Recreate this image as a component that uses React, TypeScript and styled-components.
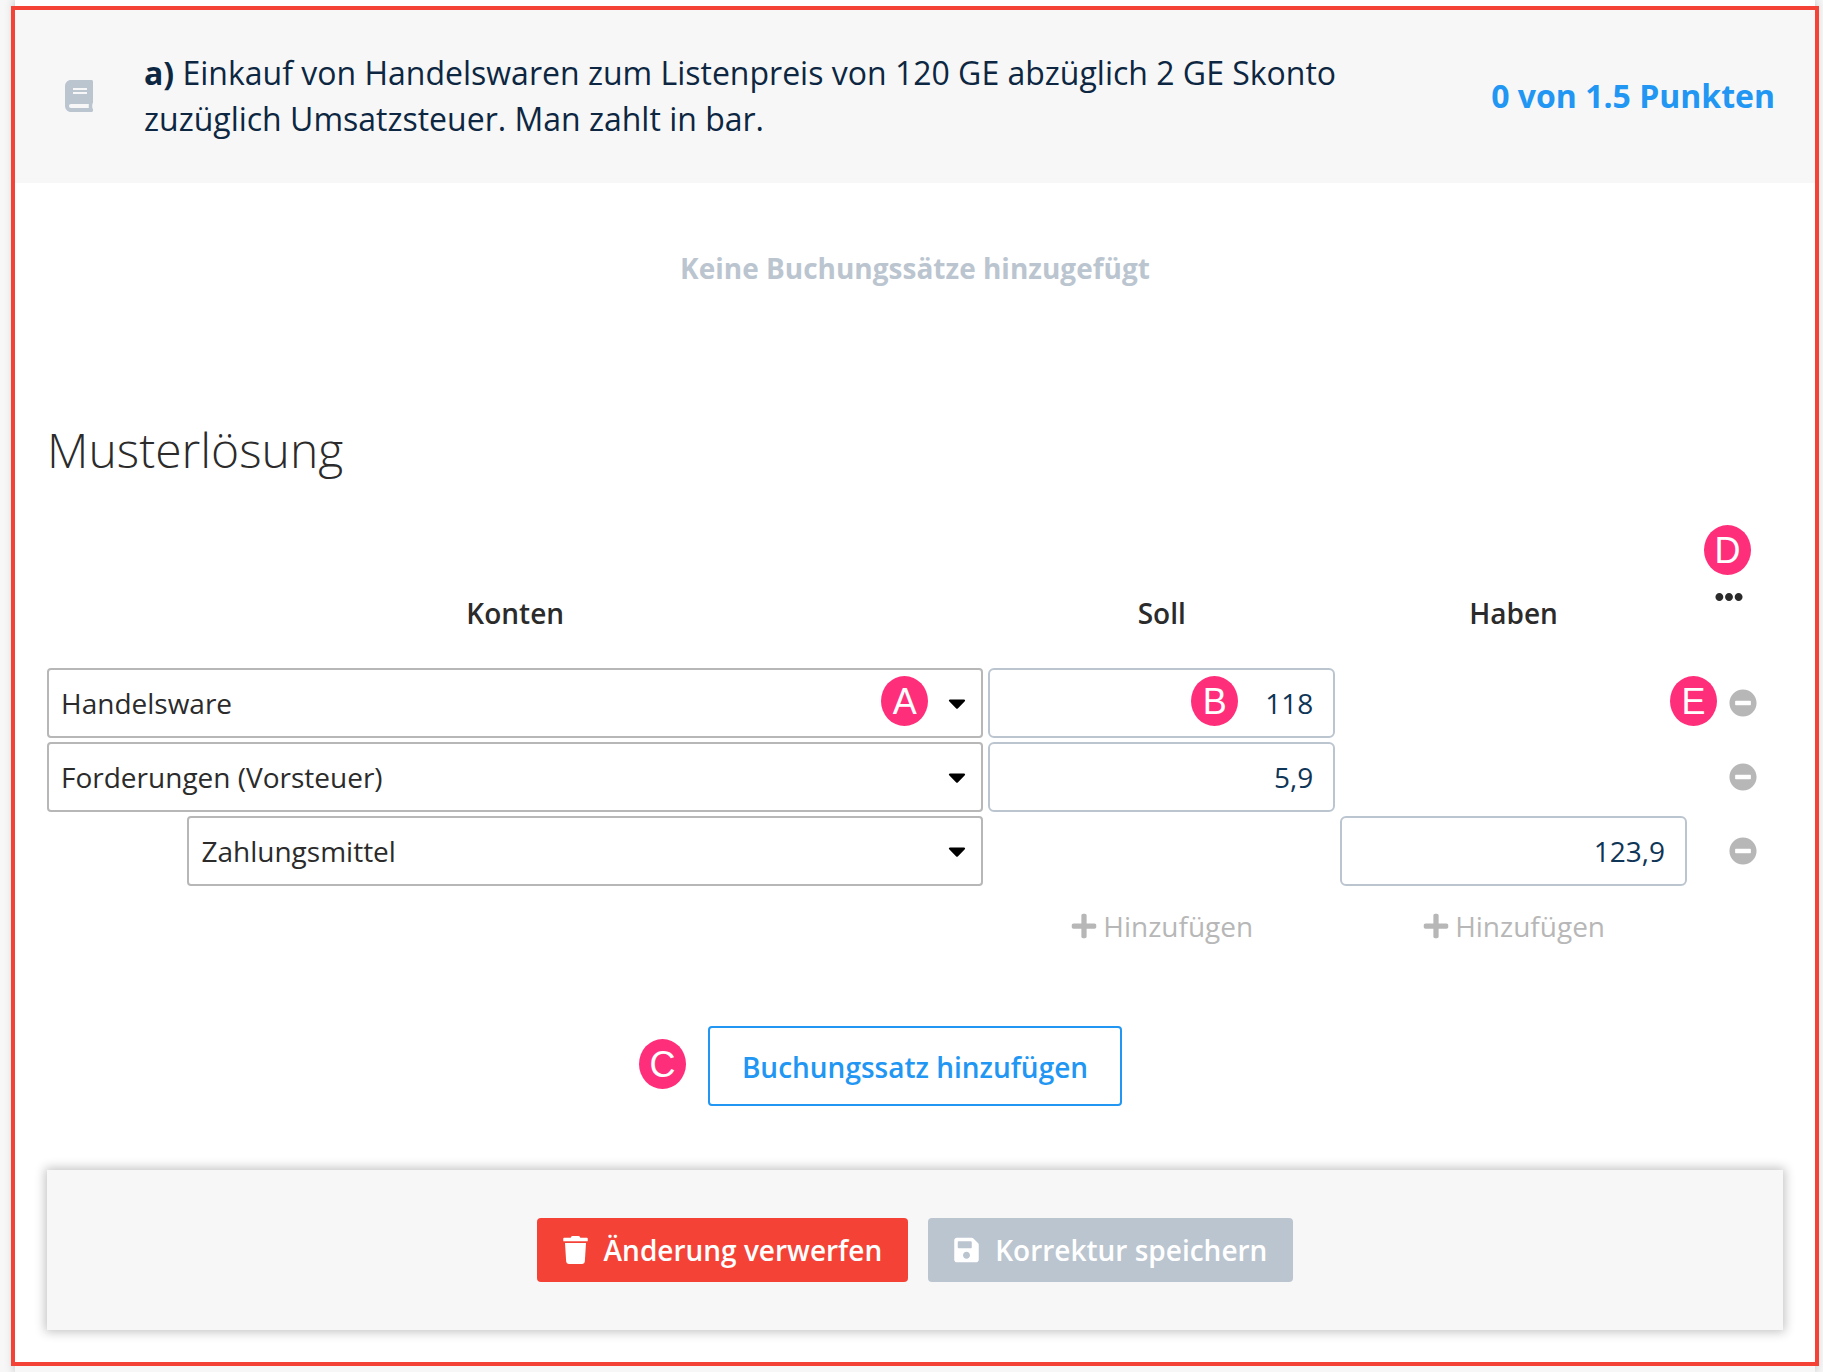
import React from "react";
import styled, { createGlobalStyle } from "styled-components";
import {
  FaBook,
  FaCaretDown,
  FaEllipsisH,
  FaMinusCircle,
  FaPlus,
  FaSave,
  FaTrash,
} from "react-icons/fa";

const GlobalStyle = createGlobalStyle`
  *, *::before, *::after { box-sizing: border-box; }
  body {
    margin: 0;
    background: #f7f7f7;
    color: #2b2b2b;
    font-family: "Open Sans", "Noto Sans", sans-serif;
    font-size: 28px;
    line-height: 40px;
  }
  button, input, select { font: inherit; margin: 0; }
  svg { display: block; flex: none; }
`;

const Sheet = styled.main`
  display: flex;
  flex-direction: column;
  min-height: 100vh;
  margin: 0 8px 0 15px;
  background: #ffffff;
  box-shadow: 0 0 10px rgba(0, 0, 0, 0.25);
`;

const PreviousEdge = styled.div`
  height: 10px;
`;

const NextEdge = styled.div`
  flex: 1;
  min-height: 10px;
  background: #f7f7f7;
`;

const Exercise = styled.section`
  position: relative;
  z-index: 1;
  outline: 4px solid #f44336;
`;

const ExerciseHeader = styled.header`
  display: flex;
  align-items: center;
  padding: 40px 40px 41px 50px;
  background: #f7f7f7;
  font-size: 32px;
  line-height: 46px;
`;

const BookIcon = styled(FaBook)`
  width: 28px;
  height: 32px;
  color: #bbc5d0;
`;

const Question = styled.p`
  flex: 1;
  margin: 0 32px 0 51px;
  color: #0d2742;
`;

const Points = styled.strong`
  color: #2196f3;
  white-space: nowrap;
`;

const Body = styled.div`
  padding: 65px 32px 32px;
`;

const EmptyNote = styled.p`
  margin: 0;
  color: #bbc5d0;
  font-weight: 700;
  text-align: center;
`;

const Title = styled.h2`
  margin: 130px 0 74px;
  font-size: 48px;
  font-weight: 300;
  line-height: 64px;
`;

const Entries = styled.table`
  display: block;

  thead, tbody, tfoot { display: block; }
`;

const Row = styled.tr<{ $height: number }>`
  display: grid;
  grid-template-columns: minmax(0, 27fr) minmax(0, 10fr) minmax(0, 10fr) 91px;
  column-gap: 5px;
  height: ${(p) => p.$height}px;
  margin-bottom: ${(p) => (p.$height === 70 ? 4 : 0)}px;
`;

const HeadCell = styled.th`
  padding: 2px 0 0;
  align-self: center;
  font-weight: 600;
  text-align: center;
`;

const Cell = styled.td<{ $indent?: boolean }>`
  position: relative;
  padding: 0 0 0 ${(p) => (p.$indent ? "15%" : "0")};
`;

const MenuCell = styled.td`
  position: relative;
  padding: 27px 0 0 23px;
`;

const RemoveCell = styled.td`
  position: relative;
  display: flex;
  align-items: center;
  padding: 0 0 0 37px;
`;

const IconButton = styled.button<{ $color: string }>`
  display: block;
  padding: 0;
  border: 0;
  background: none;
  color: ${(p) => p.$color};
  font-size: 28px;
  cursor: pointer;
`;

const AccountSelect = styled.select`
  display: block;
  width: 100%;
  height: 70px;
  padding: 0 56px 0 12px;
  border: 2px solid #b7b7b7;
  border-radius: 4px;
  background: #ffffff;
  color: #2b2b2b;
  appearance: none;
`;

const Caret = styled(FaCaretDown)`
  position: absolute;
  top: 21px;
  right: 12px;
  color: #000000;
  pointer-events: none;
`;

const AmountInput = styled.input`
  display: block;
  width: 100%;
  height: 70px;
  padding: 0 20px;
  border: 2px solid #bbc5d0;
  border-radius: 6px;
  background: #ffffff;
  color: #0f3557;
  text-align: right;
`;

const AddButton = styled.button`
  display: flex;
  align-items: center;
  justify-content: center;
  gap: 5px;
  width: 100%;
  height: 72px;
  padding: 0;
  border: 0;
  background: none;
  color: #b7b7b7;
  cursor: pointer;
`;

const Marker = styled.span<{ $top: number; $left?: number; $right?: number }>`
  position: absolute;
  top: ${(p) => p.$top}px;
  left: ${(p) => (p.$left === undefined ? "auto" : `${p.$left}px`)};
  right: ${(p) => (p.$right === undefined ? "auto" : `${p.$right}px`)};
  width: 47px;
  height: 50px;
  border-radius: 50%;
  background: #ff2e7a;
  color: #ffffff;
  font-family: "Liberation Sans", Arial, sans-serif;
  font-size: 36px;
  font-weight: 400;
  line-height: 52px;
  text-align: center;
  pointer-events: none;
`;

const AddEntry = styled.div`
  position: relative;
  width: fit-content;
  margin: 64px auto;
`;

const OutlineButton = styled.button`
  display: block;
  height: 80px;
  padding: 2px 32px 0;
  border: 2px solid #2196f3;
  border-radius: 4px;
  background: #ffffff;
  color: #2196f3;
  font-weight: 600;
  cursor: pointer;
`;

const Actions = styled.footer`
  display: flex;
  justify-content: center;
  gap: 20px;
  padding: 48px;
  background: #f7f7f7;
  box-shadow: 0 0 10px 2px rgba(0, 0, 0, 0.24);
`;

const ActionButton = styled.button<{ $color: string }>`
  display: flex;
  align-items: center;
  gap: 16px;
  height: 64px;
  padding: 0 26px;
  border: 0;
  border-radius: 4px;
  background: ${(p) => p.$color};
  color: #ffffff;
  font-weight: 600;
  cursor: pointer;

  svg { width: 25px; height: 28px; }
`;

type Entry = {
  account: string;
  side: "soll" | "haben";
  amount: string;
};

const entries: Entry[] = [
  { account: "Handelsware", side: "soll", amount: "118" },
  { account: "Forderungen (Vorsteuer)", side: "soll", amount: "5,9" },
  { account: "Zahlungsmittel", side: "haben", amount: "123,9" },
];

function EntryRow({ entry, marked }: { entry: Entry; marked: boolean }) {
  const amount = (
    <AmountInput
      type="text"
      inputMode="decimal"
      defaultValue={entry.amount}
      aria-label={`Betrag ${entry.account}`}
    />
  );
  return (
    <Row $height={70}>
      <Cell $indent={entry.side === "haben"}>
        <AccountSelect defaultValue={entry.account} aria-label="Konto">
          {entries.map((e) => (
            <option key={e.account}>{e.account}</option>
          ))}
        </AccountSelect>
        <Caret size={28} />
        {marked && <Marker $top={8} $right={55}>A</Marker>}
      </Cell>
      <Cell>
        {entry.side === "soll" && amount}
        {marked && <Marker $top={8} $right={97}>B</Marker>}
      </Cell>
      <Cell>{entry.side === "haben" && amount}</Cell>
      <RemoveCell>
        {marked && <Marker $top={8} $left={-22}>E</Marker>}
        <IconButton type="button" $color="#b7b7b7" aria-label={`${entry.account} entfernen`}>
          <FaMinusCircle />
        </IconButton>
      </RemoveCell>
    </Row>
  );
}

export default function App() {
  return (
    <>
      <GlobalStyle />
      <Sheet>
        <PreviousEdge />
        <Exercise>
          <ExerciseHeader>
            <BookIcon />
            <Question>
              <b>a)</b> Einkauf von Handelswaren zum Listenpreis von 120 GE abzüglich 2 GE Skonto
              zuzüglich Umsatzsteuer. Man zahlt in bar.
            </Question>
            <Points>0 von 1.5 Punkten</Points>
          </ExerciseHeader>
          <Body>
            <EmptyNote>Keine Buchungssätze hinzugefügt</EmptyNote>
            <Title>Musterlösung</Title>
            <Entries>
              <thead>
                <Row $height={112}>
                  <HeadCell scope="col">Konten</HeadCell>
                  <HeadCell scope="col">Soll</HeadCell>
                  <HeadCell scope="col">Haben</HeadCell>
                  <MenuCell>
                    <Marker $top={-31} $left={12}>D</Marker>
                    <IconButton type="button" $color="#2b2b2b" aria-label="Weitere Optionen">
                      <FaEllipsisH />
                    </IconButton>
                  </MenuCell>
                </Row>
              </thead>
              <tbody>
                {entries.map((entry, index) => (
                  <EntryRow key={entry.account} entry={entry} marked={index === 0} />
                ))}
              </tbody>
              <tfoot>
                <Row $height={72}>
                  <Cell />
                  <Cell>
                    <AddButton type="button">
                      <FaPlus size={28} />
                      Hinzufügen
                    </AddButton>
                  </Cell>
                  <Cell>
                    <AddButton type="button">
                      <FaPlus size={28} />
                      Hinzufügen
                    </AddButton>
                  </Cell>
                  <Cell />
                </Row>
              </tfoot>
            </Entries>
            <AddEntry>
              <Marker $top={13} $left={-69}>C</Marker>
              <OutlineButton type="button">Buchungssatz hinzufügen</OutlineButton>
            </AddEntry>
            <Actions>
              <ActionButton type="button" $color="#f44336">
                <FaTrash />
                Änderung verwerfen
              </ActionButton>
              <ActionButton type="button" $color="#bbc5d0">
                <FaSave />
                Korrektur speichern
              </ActionButton>
            </Actions>
          </Body>
        </Exercise>
        <NextEdge />
      </Sheet>
    </>
  );
}
